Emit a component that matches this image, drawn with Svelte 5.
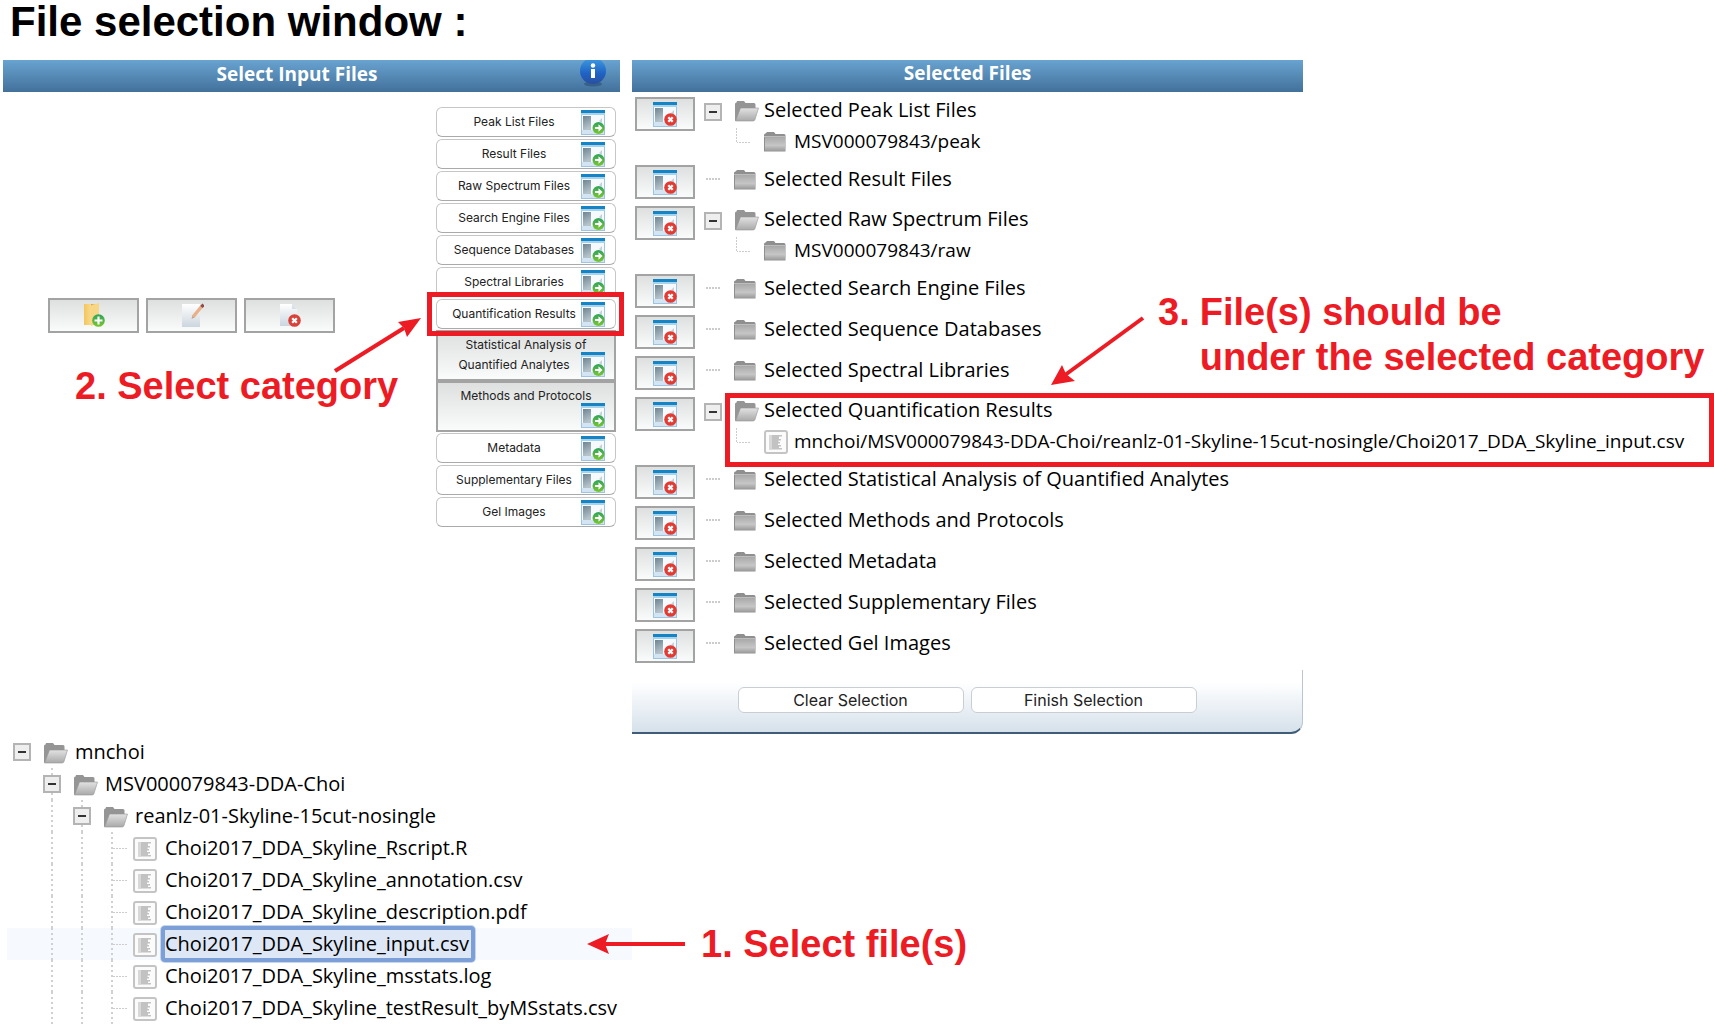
<script>
  const categories = [
    { label: 'Peak List Files' },
    { label: 'Result Files' },
    { label: 'Raw Spectrum Files' },
    { label: 'Search Engine Files' },
    { label: 'Sequence Databases' },
    { label: 'Spectral Libraries' },
    { label: 'Quantification Results', marked: true },
    { first: 'Statistical Analysis of', label: 'Quantified Analytes', tall: true },
    { first: 'Methods and Protocols', label: '', tall: true },
    { label: 'Metadata' },
    { label: 'Supplementary Files' },
    { label: 'Gel Images' }
  ];

  const selected = [
    { name: 'Selected Peak List Files', child: 'MSV000079843/peak', icon: 'folder' },
    { name: 'Selected Result Files' },
    { name: 'Selected Raw Spectrum Files', child: 'MSV000079843/raw', icon: 'folder' },
    { name: 'Selected Search Engine Files' },
    { name: 'Selected Sequence Databases' },
    { name: 'Selected Spectral Libraries' },
    {
      name: 'Selected Quantification Results',
      child: 'mnchoi/MSV000079843-DDA-Choi/reanlz-01-Skyline-15cut-nosingle/Choi2017_DDA_Skyline_input.csv',
      icon: 'file',
      marked: true
    },
    { name: 'Selected Statistical Analysis of Quantified Analytes' },
    { name: 'Selected Methods and Protocols' },
    { name: 'Selected Metadata' },
    { name: 'Selected Supplementary Files' },
    { name: 'Selected Gel Images' }
  ];

  const tree = [
    { level: 0, name: 'mnchoi', open: true },
    { level: 1, name: 'MSV000079843-DDA-Choi', open: true },
    { level: 2, name: 'reanlz-01-Skyline-15cut-nosingle', open: true },
    { level: 3, name: 'Choi2017_DDA_Skyline_Rscript.R' },
    { level: 3, name: 'Choi2017_DDA_Skyline_annotation.csv' },
    { level: 3, name: 'Choi2017_DDA_Skyline_description.pdf' },
    { level: 3, name: 'Choi2017_DDA_Skyline_input.csv', current: true },
    { level: 3, name: 'Choi2017_DDA_Skyline_msstats.log' },
    { level: 3, name: 'Choi2017_DDA_Skyline_testResult_byMSstats.csv' }
  ];
</script>

{#snippet appIcon(kind)}
  <svg class="app-icon" viewBox="0 0 24 25" aria-hidden="true">
    <rect x="0.5" y="0.5" width="23" height="24" fill="#f7fafd" stroke="#9fc3e2" />
    <rect width="24" height="3" fill="#1583c4" />
    <rect y="3" width="24" height="2" fill="#a5d3ec" />
    <rect x="2" y="6" width="8" height="14" fill="url(#side)" />
    <rect x="1" y="20" width="22" height="4" fill="#d3e4f3" />
    <path d="M18 11 21 8v5z" fill="#c6d2da" />
    {#if kind === 'add'}
      <circle cx="17.5" cy="18" r="6" fill="url(#green)" />
      <path d="M14 16.900h3.500v-2.600l4 3.700-4 3.700v-2.600H14z" fill="#fff" />
    {:else}
      <circle cx="17.500" cy="17.500" r="6.300" fill="#e23b34" />
      <path d="m15.300 15.300 4.400 4.400m0-4.400-4.400 4.400" stroke="#fff" stroke-width="2.300" />
    {/if}
  </svg>
{/snippet}

{#snippet nodeIcon(kind)}
  <svg class="node-icon" viewBox="0 0 25 24" aria-hidden="true">
    {#if kind === 'open'}
      <path d="M1 5q0-1.500 1.500-1.500L3 2h7l1.500 2H20q1.500 0 1.500 1.500V9L4 20l-3 2z" fill="#959595" />
      <path d="M6.500 9h18L21 20.500Q20.500 22 19 22H1.500z" fill="url(#flap)" stroke="#969696" stroke-width="0.600" />
    {:else if kind === 'folder'}
      <path d="M0 5q0-1.500 1.500-1.500L3 2h7l1.500 2H20q1.500 0 1.500 1.500v16H0z" fill="#8f8f8f" />
      <path d="M1 7h20v14H1z" fill="url(#face)" />
      <path d="M0 6.500h21.500" stroke="#bdbdbd" />
    {:else}
      <rect x="1" y="1" width="22" height="22" rx="2" fill="#fbfbfb" stroke="#c4c4c4" stroke-width="2" />
      <path d="M5 5h13v1.500h-3V9h2v1.500h-2.500V12H16v1.500h-2V15h3v1.500h-2V18h3v1.500H5z" fill="#c2c2c2" />
      <path d="M5 5h3v14.500H5z" fill="#d8d8d8" />
    {/if}
  </svg>
{/snippet}

{#snippet toggle(name)}
  <button class="toggle" aria-label="Collapse {name}"></button>
{/snippet}

<svg class="defs" width="0" height="0" aria-hidden="true">
  <defs>
    <linearGradient id="side" x2="0.300" y2="1"><stop stop-color="#6f8591" /><stop offset="1" stop-color="#b5c3cb" /></linearGradient>
    <linearGradient id="green" x2="0" y2="1"><stop stop-color="#2fa35c" /><stop offset="1" stop-color="#79c72f" /></linearGradient>
    <linearGradient id="flap" x2="0" y2="1"><stop stop-color="#e2e2e2" /><stop offset="1" stop-color="#a9a9a9" /></linearGradient>
    <linearGradient id="face" x2="0" y2="1"><stop stop-color="#a9a9a9" /><stop offset="0.600" stop-color="#c6c6c6" /><stop offset="1" stop-color="#9a9a9a" /></linearGradient>
    <linearGradient id="info" x2="0" y2="1"><stop stop-color="#3f9be0" /><stop offset="0.600" stop-color="#1f62c4" /><stop offset="1" stop-color="#2a4f9e" /></linearGradient>
    <linearGradient id="yellow"><stop stop-color="#f3c55c" /><stop offset="0.450" stop-color="#f8d98b" /><stop offset="0.500" stop-color="#e0a940" /><stop offset="1" stop-color="#fbe6a4" /></linearGradient>
    <linearGradient id="paper" x2="0" y2="1"><stop stop-color="#ffffff" /><stop offset="1" stop-color="#ccd6de" /></linearGradient>
  </defs>
</svg>

<main>
  <h1>File selection window :</h1>

  <div class="panels">
    <section class="input-panel">
      <header>
        <h2>Select Input Files</h2>
        <button class="info" aria-label="Information">
          <svg viewBox="0 0 28 28" aria-hidden="true">
            <ellipse cx="14" cy="24" rx="9" ry="2.500" fill="#2b4d75" opacity="0.600" />
            <circle cx="14" cy="11" r="13" fill="url(#info)" />
            <circle cx="14" cy="5.500" r="2.200" fill="#fff" />
            <path d="M12 9h4v9h-4z" fill="#fff" />
          </svg>
        </button>
      </header>
      <div class="input-body">
        <div class="actions">
          <button aria-label="New folder">
            <svg viewBox="0 0 24 26" aria-hidden="true">
              <path d="M2 2h15v21H2z" fill="url(#yellow)" />
              <path d="M9 3.500 17 1v19l-8 4z" fill="#f7d785" />
              <circle cx="16.500" cy="18.500" r="6.300" fill="url(#green)" />
              <path d="M16.500 14.500v8m-4-4h8" stroke="#fff" stroke-width="2.200" />
            </svg>
          </button>
          <button aria-label="Rename">
            <svg viewBox="0 0 24 26" aria-hidden="true">
              <path d="M2 2h18v23H2z" fill="url(#paper)" />
              <path d="m13 15 9-11" stroke="#eab088" stroke-width="3.500" />
              <path d="m21.500 5 2-2.500" stroke="#8d4b4b" stroke-width="3" />
              <path d="m11.500 17 .8-3 2 1.500z" fill="#b9a595" />
            </svg>
          </button>
          <button aria-label="Delete">
            <svg viewBox="0 0 24 26" aria-hidden="true">
              <path d="M2 2h12l5 5v17H2z" fill="url(#paper)" />
              <path d="M14 2v5h5z" fill="#d9e1e6" />
              <circle cx="16.500" cy="18.500" r="6.300" fill="#d9423b" />
              <path d="m14.200 16.200 4.600 4.600m0-4.600-4.600 4.600" stroke="#fff" stroke-width="2.200" />
            </svg>
          </button>
        </div>
        <ul class="categories">
          {#each categories as c}
            <li class:marked={c.marked} class:joined={c.tall}>
              <button class="category" class:tall={c.tall}>
                {#if c.first}<span class="first">{c.first}</span>{/if}
                <span class="last"><span class="caption">{c.label}</span>{@render appIcon('add')}</span>
              </button>
            </li>
          {/each}
        </ul>
        <p class="note note-category">2. Select category</p>
        <svg class="arrow arrow-category" viewBox="0 0 90 56" aria-hidden="true">
          <path d="M3 54 72 11" /><polygon points="89,1 66,5 72,11 75,20" />
        </svg>
      </div>
    </section>

    <section class="selected-panel">
      <header><h2>Selected Files</h2></header>
      <ul class="selected">
        {#each selected as s}
          <li>
            <button class="remove" aria-label="Remove from {s.name}">{@render appIcon('remove')}</button>
            <div class="branch" class:marked={s.marked}>
              <div class="node" class:parent={s.child}>
                <span class="cell">
                  {#if s.child}{@render toggle(s.name)}{:else}<span class="dash"></span>{/if}
                </span>
                {@render nodeIcon(s.child ? 'open' : 'folder')}
                <a href="#files">{s.name}</a>
              </div>
              {#if s.child}
                <div class="node child">
                  <span class="cell"></span>
                  <span class="cell"><span class="elbow"></span></span>
                  {@render nodeIcon(s.icon)}
                  <a href="#files">{s.child}</a>
                </div>
              {/if}
            </div>
          </li>
        {/each}
      </ul>
      <footer>
        <button>Clear Selection</button>
        <button>Finish Selection</button>
      </footer>
      <p class="note note-result">3. <span>File(s) should be<br />under the selected category</span></p>
      <svg class="arrow arrow-result" viewBox="0 0 94 72" aria-hidden="true">
        <path d="M92 2 14 59" /><polygon points="0,69 11,49 15,58 24,65" />
      </svg>
    </section>
  </div>

  <ul class="tree">
    {#each tree as t}
      <li class="node" class:current={t.current}>
        {#each Array(t.level + 1) as _, i}
          <span class="cell" class:line={i > 0} class:tick={i === 3}>
            {#if t.open && i === t.level}{@render toggle(t.name)}{/if}
          </span>
        {/each}
        {@render nodeIcon(t.open ? 'open' : 'file')}
        <a href="#files">{t.name}</a>
        {#if t.current}
          <svg class="arrow arrow-file" viewBox="0 0 98 22" aria-hidden="true">
            <path d="M98 11H16" /><polygon points="0,11 22,1 18,11 22,21" />
          </svg>
          <span class="note note-file">1. Select file(s)</span>
        {/if}
      </li>
    {/each}
  </ul>
</main>

<style>
  :global(body) {
    margin: 0;
    background: #fff;
  }
  main {
    color: #000;
    font: 500 20px/28px 'Open Sans', sans-serif;
  }
  .defs {
    position: absolute;
  }
  h1,
  h2,
  p,
  ul {
    margin: 0;
    padding: 0;
    list-style: none;
  }
  button {
    box-sizing: border-box;
    margin: 0;
    padding: 0;
    color: #222;
    font-family: Inter, sans-serif;
  }
  h1 {
    padding: 0 10px 16px;
    color: #000;
    font: bold 42px/44px 'Liberation Sans', sans-serif;
  }
  .panels {
    display: grid;
    grid-template-columns: minmax(0, 617fr) minmax(0, 671fr) minmax(0, 399fr);
    column-gap: 12px;
    padding-left: 3px;
  }
  header {
    display: flex;
    align-items: flex-start;
    height: 32px;
    background: linear-gradient(#69a3d0, #42719b);
  }
  h2 {
    flex: 1;
    color: #fff;
    text-align: center;
    font: bold 19px/26px 'Open Sans', sans-serif;
  }
  .input-panel h2 {
    padding: 1px 0 0 12px;
  }
  .selected-panel,
  .input-body {
    position: relative;
  }
  .info {
    width: 28px;
    height: 28px;
    margin-right: 13px;
    border: 0;
    background: none;
  }
  .info svg {
    display: block;
  }
  .input-body {
    display: flex;
    justify-content: space-between;
    align-items: center;
    padding: 15px 4px 0 45px;
  }
  .actions {
    display: flex;
    gap: 7px;
    padding-bottom: 4px;
  }
  .actions button,
  .remove,
  .category.tall {
    border: 2px solid #a3a3a3;
    background: linear-gradient(#dedfdf, #fafbfb);
  }
  .actions button {
    width: 91px;
    height: 35px;
  }
  .actions svg {
    width: 24px;
    height: 26px;
    vertical-align: middle;
  }
  .categories {
    display: grid;
    gap: 2px;
    width: 180px;
  }
  .category {
    display: block;
    width: 100%;
    min-height: 30px;
    padding: 0 10px;
    border: 1px solid #c6c6c6;
    border-bottom-color: #aaa;
    border-radius: 6px;
    background: #fff;
    font-size: 12px;
    line-height: 20px;
    white-space: nowrap;
  }
  .joined {
    margin: -1px 0;
  }
  .category.tall {
    height: 51px;
    padding: 0 9px 2px;
    border-radius: 0;
  }
  .first {
    display: block;
    height: 20px;
    line-height: 25px;
  }
  .last {
    display: flex;
    align-items: center;
    height: 25px;
  }
  .caption {
    flex: 1;
  }
  .app-icon {
    flex: none;
    width: 24px;
    height: 25px;
  }
  .marked {
    position: relative;
  }
  .marked::after {
    position: absolute;
    inset: -7px -8px -7px -9px;
    border: 5px solid #ed1c24;
    content: '';
    pointer-events: none;
  }
  .selected {
    padding: 5px 3px 0;
  }
  .selected li {
    display: flex;
    gap: 3px;
    margin-bottom: 7px;
  }
  .remove {
    display: grid;
    place-items: center;
    flex: none;
    width: 60px;
    height: 34px;
  }
  .branch {
    flex: none;
    width: max-content;
    padding-bottom: 3px;
  }
  .branch.marked {
    padding-right: 20px;
  }
  .branch.marked::after {
    inset: -4px -10px -9px 27px;
  }
  .node {
    display: flex;
    align-items: center;
    height: 28px;
    white-space: nowrap;
  }
  .node.parent {
    height: 26px;
  }
  .node.child {
    height: 32px;
    margin-top: 2px;
    margin-bottom: -2px;
    font-size: 19px;
  }
  .cell {
    display: flex;
    flex: none;
    align-items: center;
    justify-content: center;
    align-self: stretch;
    width: 30px;
  }
  .dash {
    width: 14px;
    height: 2px;
    background: repeating-linear-gradient(90deg, #ccc 0 2px, #fff 2px 3px);
  }
  .elbow {
    width: 14px;
    height: 15px;
    margin-bottom: 12px;
    background:
      repeating-linear-gradient(#ccc 0 2px, #fff 2px 3px) 0 0 / 1px 100% no-repeat,
      repeating-linear-gradient(90deg, #ccc 0 2px, #fff 2px 3px) 0 100% / 100% 1px no-repeat;
  }
  .toggle {
    width: 18px;
    height: 18px;
    margin-top: 3px;
    border: 2px solid #b4b4b4;
    background: linear-gradient(#333, #333) center / 8px 2px no-repeat, #eee;
  }
  .node-icon {
    flex: none;
    width: 25px;
    height: 24px;
    margin: 2px 5px 0 6px;
  }
  a {
    color: inherit;
    text-decoration: none;
  }
  footer {
    display: flex;
    justify-content: center;
    gap: 7px;
    padding: 17px 0 19px;
    border-right: 1px solid #b9c6d2;
    border-bottom: 2px solid #3f5d78;
    border-radius: 0 0 12px;
    background: linear-gradient(#fff 20%, #d6e1eb);
  }
  footer button {
    width: 226px;
    height: 26px;
    border: 1px solid #c9ced2;
    border-radius: 6px;
    background: #fff;
    font-size: 16px;
  }
  .tree {
    padding: 2px 0 0 7px;
  }
  .tree .node {
    height: 32px;
  }
  .tree .node-icon {
    margin-right: 7px;
  }
  .tree .toggle {
    margin: 0;
  }
  .line {
    background: repeating-linear-gradient(#d0d0d0 0 2px, transparent 2px 5px) center / 2px 100% no-repeat;
  }
  .tick {
    background:
      repeating-linear-gradient(#d0d0d0 0 2px, transparent 2px 5px) center / 2px 100% no-repeat,
      repeating-linear-gradient(90deg, #ccc 0 2px, transparent 2px 3px) right / 14px 1px no-repeat;
  }
  .tree .current {
    position: relative;
    background: linear-gradient(#f6faff, #f6faff) 0 0 / 625px 100% no-repeat;
  }
  .current a {
    margin: 0 -4px;
    padding: 0 2px;
    border: 4px solid #7c9fd8;
    border-radius: 4px;
    background: #dde7f5;
    background-clip: padding-box;
    box-shadow: 0 0 0 1px #c5d5ef;
    text-indent: -2px;
  }
  .note {
    position: absolute;
    color: #ed1c24;
    font: bold 38px/45px 'Liberation Sans', sans-serif;
    white-space: nowrap;
  }
  .note-category {
    top: 272px;
    left: 72px;
  }
  .note-result {
    display: flex;
    gap: 10px;
    top: 230px;
    left: 526px;
  }
  .note-file {
    left: 694px;
  }
  .arrow {
    position: absolute;
    fill: #ed1c24;
  }
  .arrow path {
    stroke: #ed1c24;
    stroke-width: 4;
  }
  .arrow-category {
    top: 225px;
    right: 198px;
    width: 90px;
  }
  .arrow-result {
    top: 256px;
    left: 419px;
    width: 94px;
  }
  .arrow-file {
    left: 580px;
    width: 98px;
  }
</style>
